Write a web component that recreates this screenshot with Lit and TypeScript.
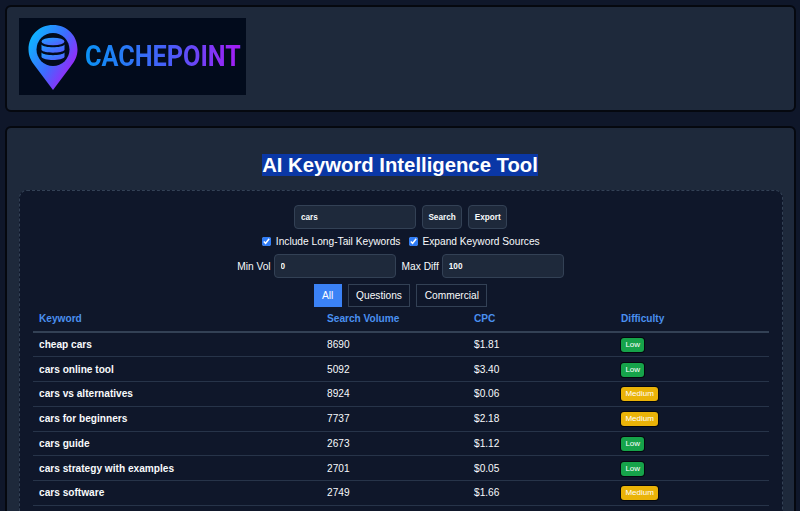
import { LitElement, html, css, svg } from "lit";
import { customElement } from "lit/decorators.js";

const rows = [
  ["cheap cars", "8690", "$1.81", "Low"],
  ["cars online tool", "5092", "$3.40", "Low"],
  ["cars vs alternatives", "8924", "$0.06", "Medium"],
  ["cars for beginners", "7737", "$2.18", "Medium"],
  ["cars guide", "2673", "$1.12", "Low"],
  ["cars strategy with examples", "2701", "$0.05", "Low"],
  ["cars software", "2749", "$1.66", "Medium"],
];

const pin = svg`<svg class="pin" viewBox="0 0 50 66" width="50" height="66">
  <defs><linearGradient id="pg" x1="0" y1="0" x2="1" y2="0.75">
    <stop offset="0" stop-color="#00c8ff"/><stop offset="0.55" stop-color="#3d6cff"/><stop offset="1" stop-color="#b414f5"/>
  </linearGradient>
  <linearGradient id="dg" x1="0" y1="0" x2="1" y2="1">
    <stop offset="0" stop-color="#1ea4ff"/><stop offset="1" stop-color="#5a55ff"/>
  </linearGradient></defs>
  <path d="M25 0C11 0 0.500 10.500 0.500 24.500C0.500 31 3 36 7 41L25 65L43 41C47 36 49.500 31 49.500 24.500C49.500 10.500 39 0 25 0Z" fill="url(#pg)"/>
  <circle cx="25" cy="24.500" r="16.500" fill="#020b1c"/>
  <ellipse cx="25" cy="16.500" rx="11.500" ry="3.800" fill="url(#dg)"/>
  <path d="M13.500 19.500C15.500 23.200 34.500 23.200 36.500 19.500V25C34.500 28.500 15.500 28.500 13.500 25Z" fill="url(#dg)"/>
  <path d="M13.500 27.500C15.500 31 34.500 31 36.500 27.500V32C34.500 36 15.500 36 13.500 32Z" fill="url(#dg)"/>
</svg>`;

@customElement("app-root")
export class AppRoot extends LitElement {
  static styles = css`
    :host { display: block; background: #0f172a; font-family: "Liberation Sans", Arial, sans-serif; color: #f8fafc; height: 511px; overflow: hidden; box-sizing: border-box; padding: 5px 4px 0 5px; }
    .card { background: #1e293b; border: 2px solid #05080f; border-radius: 6px; padding: 11px 11px 15px 12px; margin-bottom: 14px; }
    .logo { width: 227px; height: 77px; background: #020b1c; display: flex; align-items: center; gap: 7px; padding-left: 9px; box-sizing: border-box; }
    .pin { flex: none; margin-top: 2px; }
    .word { font-family: Roboto, sans-serif; font-weight: 700; font-size: 29.5px; line-height: 1; transform: scaleX(0.855); transform-origin: left center; background: linear-gradient(90deg, #0a92f5, #4a5cf8 55%, #a61bf5); -webkit-background-clip: text; background-clip: text; color: transparent; }
    .main { padding-top: 25px; }
    h1 { margin: 0 0 13px; padding-right: 2px; text-align: center; font-size: 20.3px; line-height: 24px; font-weight: 700; color: #fff; }
    h1 span { background: #0a37a6; }
    .panel { background: #0f172a; border: 1px dashed #334155; border-radius: 8px; padding: 14px 13px 13px; }
    .line { display: flex; justify-content: center; align-items: center; padding-right: 1px; }
    .search { gap: 6px; margin-bottom: 5px; }
    input[type="text"] { box-sizing: border-box; width: 122px; height: 24px; background: #1e293b; border: 1px solid #334155; border-radius: 4px; color: #f8fafc; font: 700 8.2px "Liberation Sans", sans-serif; padding: 0 6px; outline: none; }
    .btn { box-sizing: border-box; height: 24px; background: #1e293b; border: 1px solid #334155; border-radius: 4px; color: #f8fafc; font: 700 8.2px "Liberation Sans", sans-serif; padding: 0 5.5px; }
    .checks { gap: 8.5px; font-size: 10.2px; height: 14px; margin-bottom: 6px; padding-right: 0; }
    .checks label { display: flex; align-items: center; gap: 4.5px; }
    .checks input { margin: 0; width: 9px; height: 9px; accent-color: #2f7cf6; }
    .filters { gap: 6px; font-size: 10.2px; margin-bottom: 6px; height: 24px; }
    .filters label { display: flex; align-items: center; gap: 3px; }
    .tabs { gap: 6px; height: 23px; }
    .tab { box-sizing: border-box; height: 23px; background: #0f172a; border: 1px solid #334155; color: #f8fafc; font: 400 10.2px "Liberation Sans", sans-serif; padding: 0 7.4px; }
    .tab.on { background: #3b82f6; border-color: #3b82f6; color: #fff; }
    table { width: 736px; border-collapse: collapse; table-layout: fixed; font-size: 10.15px; }
    th { text-align: left; color: #4a90f0; font-weight: 700; padding: 0 6px; height: 23.5px; border-bottom: 2px solid #334155; }
    td { padding: 0 6px; height: 23.75px; border-bottom: 1px solid #273449; }
    td:first-child { font-weight: 700; }
    .c1 { width: 288px; }
    .c2, .c3 { width: 147px; }
    .c4 { width: 154px; }
    .badge { display: inline-block; vertical-align: middle; margin-top: 1px; padding: 2px 4.4px; font-size: 8px; line-height: 10px; border-radius: 3px; color: #fff; box-shadow: 0 0 0 1px #05080f; }
    .Low { background: #16a34a; }
    .Medium { background: #eab308; }
  `;

  render() {
    return html`
      <div class="card">
        <div class="logo">${pin}<span class="word">CACHEPOINT</span></div>
      </div>
      <div class="card main">
        <h1><span>AI Keyword Intelligence Tool</span></h1>
        <div class="panel">
          <div class="line search">
            <input type="text" .value=${"cars"} />
            <button class="btn">Search</button>
            <button class="btn">Export</button>
          </div>
          <div class="line checks">
            <label><input type="checkbox" checked />Include Long-Tail Keywords</label>
            <label><input type="checkbox" checked />Expand Keyword Sources</label>
          </div>
          <div class="line filters">
            <label>Min Vol <input type="text" .value=${"0"} /></label>
            <label>Max Diff <input type="text" .value=${"100"} /></label>
          </div>
          <div class="line tabs">
            <button class="tab on">All</button>
            <button class="tab">Questions</button>
            <button class="tab">Commercial</button>
          </div>
          <table>
            <colgroup><col class="c1" /><col class="c2" /><col class="c3" /><col class="c4" /></colgroup>
            <thead><tr><th>Keyword</th><th>Search Volume</th><th>CPC</th><th>Difficulty</th></tr></thead>
            <tbody>
              ${rows.map((r) => html`<tr><td>${r[0]}</td><td>${r[1]}</td><td>${r[2]}</td><td><span class="badge ${r[3]}">${r[3]}</span></td></tr>`)}
            </tbody>
          </table>
        </div>
      </div>
    `;
  }
}
